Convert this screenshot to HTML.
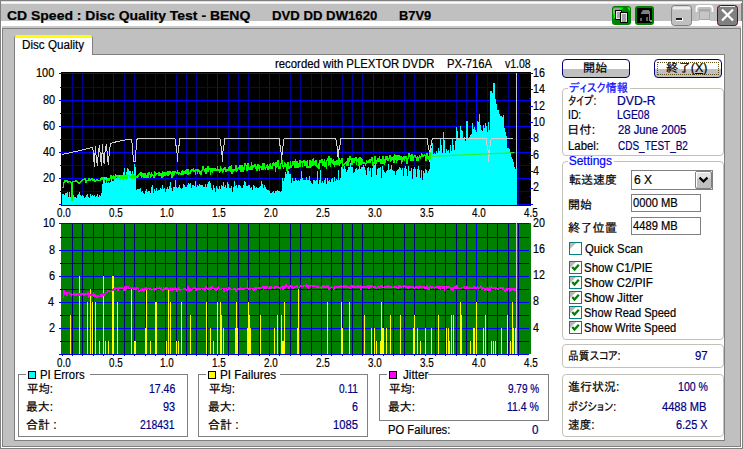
<!DOCTYPE html>
<html lang="ja"><head><meta charset="utf-8"><title>CD Speed : Disc Quality Test</title>
<style>
html,body{margin:0;padding:0}
body{width:743px;height:449px;overflow:hidden;background:#c0c0c0;position:relative;font-family:"Liberation Sans","IPAPGothic","IPAGothic","Noto Sans CJK JP",sans-serif;font-size:12px}
.t{position:absolute;height:14px;line-height:14px;white-space:nowrap;font-size:12px;-webkit-text-stroke:0.2px}

.a{position:absolute}
.gb{position:absolute;border:1px solid #808080;box-sizing:border-box}
.rg{position:absolute;border:1px solid #c2c2ba;border-radius:4px;box-sizing:border-box}
.cap{position:absolute;background:#fff;height:3px}
.btn{position:absolute;box-sizing:border-box;border:1px solid #000080;border-radius:4px;background:linear-gradient(#fff 0,#fff 52%,#c0c0c0 52%,#c0c0c0 100%)}
.ed{position:absolute;box-sizing:border-box;border:1px solid #808080;background:#fff}
.cb{position:absolute;box-sizing:border-box;width:13px;height:13px;border:1px solid #008080;background:#fff;overflow:hidden}
.cb:before{content:"";position:absolute;left:0;top:0;border-top:6px solid #b8b8b8;border-right:6px solid transparent}
.sq{position:absolute;box-sizing:border-box;width:8px;height:8px;border:1px solid #000}

</style></head><body>
<div class="a" style="left:0px;top:0px;width:743px;height:1px;background:#808080;"></div>
<div class="a" style="left:0px;top:1px;width:743px;height:1px;background:#dcdcdc;"></div>
<div class="a" style="left:0px;top:2px;width:743px;height:1px;background:#fff;"></div>
<div class="a" style="left:0px;top:3px;width:743px;height:1px;background:#ececec;"></div>
<div class="a" style="left:0px;top:0px;width:1px;height:449px;background:#808080;"></div>
<div class="a" style="left:1px;top:24px;width:1px;height:423px;background:#fff;"></div>
<div class="a" style="left:2px;top:28px;width:1px;height:418px;background:#808080;"></div>
<div class="a" style="left:742px;top:0px;width:1px;height:449px;background:#808080;"></div>
<div class="a" style="left:741px;top:3px;width:1px;height:21px;background:#808080;"></div>
<div class="a" style="left:741px;top:24px;width:1px;height:423px;background:#fff;"></div>
<div class="a" style="left:740px;top:28px;width:1px;height:418px;background:#808080;"></div>
<div class="a" style="left:0px;top:448px;width:743px;height:1px;background:#808080;"></div>
<div class="a" style="left:1px;top:447px;width:741px;height:1px;background:#fff;"></div>
<div class="a" style="left:2px;top:446px;width:739px;height:1px;background:#808080;"></div>
<div class="a" style="left:1px;top:21px;width:741px;height:5px;background:#fff;"></div>
<div class="a" style="left:2px;top:26px;width:739px;height:2px;background:#c8c8c8;"></div>
<div class="a" style="left:2px;top:28px;width:739px;height:1px;background:#808080;"></div>
<div class="a" style="left:14px;top:54px;width:711px;height:387px;background:#808080;"></div>
<div class="a" style="left:15px;top:55px;width:709px;height:385px;background:#fff;"></div>
<div class="a" style="left:14px;top:36px;width:79px;height:19px;background:#808080;border-radius:2px 2px 0 0"></div>
<div class="a" style="left:15px;top:35px;width:77px;height:3px;background:#ffff00;border-radius:2px 2px 0 0"></div>
<div class="a" style="left:15px;top:38px;width:77px;height:17px;background:#fff;"></div>
<svg class="a" style="left:610px;top:4px" width="46" height="23" viewBox="610 4 46 23">
<rect x="612" y="6" width="19" height="19" rx="3" fill="#008000"/>
<path d="M613.5,7.5h10l-10,12z" fill="#00ff00"/>
<path d="M627,7.5h3v4z" fill="#00ff00"/>
<path d="M613,9v6l7,-7h-5z" fill="#a0a0a0"/>
<rect x="615.5" y="10.5" width="6" height="9" fill="#e8e8e8" stroke="#000"/>
<rect x="620.500" y="12.5" width="7" height="10" fill="#e8e8e8" stroke="#000"/>
<path d="M617,13h3M617,15h3M617,17h3M622,15h4M622,17h4M622,19h4M622,21h4" stroke="#606060" stroke-width="1"/>
<rect x="635" y="6" width="19" height="19" rx="3" fill="#008000"/>
<rect x="637" y="8" width="15" height="15" fill="#000"/>
<path d="M641,13l2,-3h6v4h-8z" fill="#808080"/>
<rect x="649" y="11" width="1" height="10" fill="#808080"/>
<rect x="640" y="18" width="2" height="3" fill="#606060"/>
<rect x="646" y="17" width="2" height="4" fill="#606060"/>
<rect x="650" y="20" width="2" height="2" fill="#909090"/>
</svg>
<svg class="a" style="left:668px;top:3px" width="73" height="25" viewBox="668 3 73 25">
<rect x="671.5" y="5.500" width="20" height="20" rx="3" fill="#c0c0c0" stroke="#808080"/>
<rect x="672.5" y="6.5" width="18" height="3" rx="1.500" fill="#ececec"/>
<rect x="672" y="21" width="19" height="1" fill="#fff" opacity=".0"/>
<rect x="676" y="18" width="7" height="3" fill="#fff"/>
<rect x="676" y="18" width="6" height="2" fill="#202020"/>
<path d="M696.5,12v-3.500q0,-2.500 2.500,-2.500h11q2.500,0 2.500,2.500v3.500" fill="none" stroke="#fff" stroke-width="1.800"/>
<rect x="696" y="14" width="18" height="7" fill="#c4c4c4"/>
<rect x="699.5" y="10.5" width="10" height="10" fill="#c6c6c6" stroke="#fff"/>
<rect x="699.5" y="9.5" width="10" height="10" fill="none" stroke="#a8a8a8"/>
<rect x="699.5" y="9.500" width="10" height="2" fill="#a8a8a8"/>
<rect x="717.5" y="5.500" width="20" height="20" rx="3" fill="#808080" stroke="#800000"/>
<path d="M720,25.500h15" stroke="#800080" stroke-width="1"/>
<path d="M720,6.500h15" stroke="#e8e8e8" stroke-width="1"/>
<path d="M722,9.500l11,11M733,9.500l-11,11" stroke="#fff" stroke-width="2.200"/>
</svg>
<div class="btn" style="left:562px;top:59px;width:68px;height:19px"></div>
<div class="btn" style="left:654px;top:59px;width:68px;height:19px"><div class="a" style="left:2px;top:2px;right:2px;bottom:2px;border:1px dotted #605020"></div></div>
<div class="rg" style="left:562px;top:88px;width:162px;height:68px"></div>
<div class="cap" style="left:568px;top:87px;width:62px"></div>
<div class="rg" style="left:562px;top:161px;width:162px;height:179px"></div>
<div class="cap" style="left:568px;top:160px;width:46px"></div>
<div class="rg" style="left:562px;top:344px;width:162px;height:24px"></div>
<div class="rg" style="left:562px;top:374px;width:162px;height:63px"></div>
<div class="ed" style="left:631px;top:170px;width:82px;height:20px"></div>
<svg class="a" style="left:695px;top:171px" width="17" height="18" viewBox="0 0 17 18">
<rect x="0.5" y="0.5" width="16" height="17" rx="1.500" fill="#c0c0c0" stroke="#808080"/>
<rect x="1.500" y="1.500" width="14" height="6" fill="#e4e4e4"/>
<path d="M1.500,16V1.500H15" fill="none" stroke="#fff"/>
<path d="M4.500,6.500l4,4l4,-4" fill="none" stroke="#000" stroke-width="2.200"/>
</svg>
<div class="ed" style="left:631px;top:194px;width:70px;height:18px"></div>
<div class="ed" style="left:631px;top:217px;width:70px;height:18px"></div>
<div class="cb" style="left:569px;top:242px"></div>
<div class="cb" style="left:569px;top:261px"><svg class="a" style="left:0;top:0" width="11" height="11" viewBox="0 0 11 11"><path d="M2.200,5l2.300,2.600l4.300,-4.800" fill="none" stroke="#008000" stroke-width="2.200"/></svg></div>
<div class="cb" style="left:569px;top:276px"><svg class="a" style="left:0;top:0" width="11" height="11" viewBox="0 0 11 11"><path d="M2.200,5l2.300,2.600l4.300,-4.800" fill="none" stroke="#008000" stroke-width="2.200"/></svg></div>
<div class="cb" style="left:569px;top:291px"><svg class="a" style="left:0;top:0" width="11" height="11" viewBox="0 0 11 11"><path d="M2.200,5l2.300,2.600l4.300,-4.800" fill="none" stroke="#008000" stroke-width="2.200"/></svg></div>
<div class="cb" style="left:569px;top:306px"><svg class="a" style="left:0;top:0" width="11" height="11" viewBox="0 0 11 11"><path d="M2.200,5l2.300,2.600l4.300,-4.800" fill="none" stroke="#008000" stroke-width="2.200"/></svg></div>
<div class="cb" style="left:569px;top:321px"><svg class="a" style="left:0;top:0" width="11" height="11" viewBox="0 0 11 11"><path d="M2.200,5l2.300,2.600l4.300,-4.800" fill="none" stroke="#008000" stroke-width="2.200"/></svg></div>
<div class="gb" style="left:18px;top:374px;width:170px;height:63px"></div>
<div class="cap" style="left:26px;top:373px;width:64px"></div>
<div class="sq" style="left:28px;top:371px;background:#00ffff"></div>
<div class="gb" style="left:198px;top:374px;width:170px;height:63px"></div>
<div class="cap" style="left:206px;top:373px;width:74px"></div>
<div class="sq" style="left:208px;top:371px;background:#ffff00"></div>
<div class="gb" style="left:379px;top:374px;width:170px;height:47px"></div>
<div class="cap" style="left:387px;top:373px;width:41px"></div>
<div class="sq" style="left:389px;top:371px;background:#ff00ff"></div>
<svg width="743" height="449" viewBox="0 0 743 449" style="position:absolute;left:0;top:0" shape-rendering="crispEdges">
<rect x="61" y="72" width="470" height="134" fill="#000"/>
<rect x="72" y="73" width="1" height="132" fill="#000094"/>
<rect x="82" y="73" width="1" height="132" fill="#000094"/>
<rect x="93" y="73" width="1" height="132" fill="#000094"/>
<rect x="103" y="73" width="1" height="132" fill="#000094"/>
<rect x="113" y="73" width="1" height="132" fill="#0000ff"/>
<rect x="124" y="73" width="1" height="132" fill="#000094"/>
<rect x="134" y="73" width="1" height="132" fill="#000094"/>
<rect x="145" y="73" width="1" height="132" fill="#000094"/>
<rect x="155" y="73" width="1" height="132" fill="#000094"/>
<rect x="165" y="73" width="1" height="132" fill="#0000ff"/>
<rect x="176" y="73" width="1" height="132" fill="#000094"/>
<rect x="186" y="73" width="1" height="132" fill="#000094"/>
<rect x="196" y="73" width="1" height="132" fill="#000094"/>
<rect x="207" y="73" width="1" height="132" fill="#000094"/>
<rect x="217" y="73" width="1" height="132" fill="#0000ff"/>
<rect x="228" y="73" width="1" height="132" fill="#000094"/>
<rect x="238" y="73" width="1" height="132" fill="#000094"/>
<rect x="248" y="73" width="1" height="132" fill="#000094"/>
<rect x="259" y="73" width="1" height="132" fill="#000094"/>
<rect x="269" y="73" width="1" height="132" fill="#0000ff"/>
<rect x="279" y="73" width="1" height="132" fill="#000094"/>
<rect x="290" y="73" width="1" height="132" fill="#000094"/>
<rect x="300" y="73" width="1" height="132" fill="#000094"/>
<rect x="311" y="73" width="1" height="132" fill="#000094"/>
<rect x="321" y="73" width="1" height="132" fill="#0000ff"/>
<rect x="331" y="73" width="1" height="132" fill="#000094"/>
<rect x="342" y="73" width="1" height="132" fill="#000094"/>
<rect x="352" y="73" width="1" height="132" fill="#000094"/>
<rect x="362" y="73" width="1" height="132" fill="#000094"/>
<rect x="373" y="73" width="1" height="132" fill="#0000ff"/>
<rect x="383" y="73" width="1" height="132" fill="#000094"/>
<rect x="393" y="73" width="1" height="132" fill="#000094"/>
<rect x="404" y="73" width="1" height="132" fill="#000094"/>
<rect x="414" y="73" width="1" height="132" fill="#000094"/>
<rect x="425" y="73" width="1" height="132" fill="#0000ff"/>
<rect x="435" y="73" width="1" height="132" fill="#000094"/>
<rect x="445" y="73" width="1" height="132" fill="#000094"/>
<rect x="456" y="73" width="1" height="132" fill="#000094"/>
<rect x="466" y="73" width="1" height="132" fill="#000094"/>
<rect x="476" y="73" width="1" height="132" fill="#0000ff"/>
<rect x="487" y="73" width="1" height="132" fill="#000094"/>
<rect x="497" y="73" width="1" height="132" fill="#000094"/>
<rect x="508" y="73" width="1" height="132" fill="#000094"/>
<rect x="518" y="73" width="1" height="132" fill="#000094"/>
<rect x="62" y="73" width="469" height="1" fill="#0000ff"/>
<rect x="62" y="87" width="469" height="1" fill="#000094"/>
<rect x="62" y="100" width="469" height="1" fill="#0000ff"/>
<rect x="62" y="113" width="469" height="1" fill="#000094"/>
<rect x="62" y="126" width="469" height="1" fill="#0000ff"/>
<rect x="62" y="139" width="469" height="1" fill="#000094"/>
<rect x="62" y="152" width="469" height="1" fill="#0000ff"/>
<rect x="62" y="165" width="469" height="1" fill="#000094"/>
<rect x="62" y="178" width="469" height="1" fill="#0000ff"/>
<rect x="62" y="191" width="469" height="1" fill="#000094"/>
<rect x="62" y="204" width="469" height="1" fill="#0000ff"/>
<rect x="516" y="73" width="1" height="100" fill="#c8c8c8"/>
<path d="M62,205V194H63V194H64V195H65V193H66V193H67V192H68V197H69V192H70V197H71V195H72V194H73V195H74V197H75V197H76V198H77V195H78V194H79V192H80V195H81V196H82V195H83V196H84V198H85V197H86V195H87V194H88V197H89V198H90V194H91V196H92V195H93V196H94V195H95V197H96V196H97V194H98V197H99V195H100V196H101V193H102V184H103V180H104V177H105V183H106V177H107V183H108V182H109V183H110V182H111V178H112V181H113V181H114V178H115V174H116V178H117V178H118V178H119V175H120V178H121V177H122V175H123V172H124V168H125V176H126V172H127V168H128V169H129V171H130V171H131V174H132V171H133V174H134V164H135V167H136V190H137V189H138V189H139V189H140V188H141V192H142V191H143V193H144V194H145V191H146V189H147V192H148V191H149V191H150V193H151V187H152V185H153V193H154V189H155V191H156V188H157V191H158V190H159V190H160V188H161V189H162V185H163V189H164V188H165V192H166V189H167V187H168V189H169V186H170V182H171V188H172V191H173V187H174V187H175V180H176V187H177V188H178V187H179V185H180V188H181V189H182V188H183V184H184V185H185V187H186V187H187V185H188V183H189V184H190V183H191V188H192V185H193V185H194V186H195V181H196V187H197V185H198V186H199V184H200V185H201V185H202V185H203V187H204V187H205V184H206V187H207V184H208V182H209V181H210V183H211V188H212V190H213V185H214V188H215V192H216V186H217V188H218V189H219V186H220V189H221V185H222V186H223V182H224V187H225V185H226V188H227V182H228V184H229V188H230V188H231V186H232V192H233V187H234V181H235V186H236V185H237V188H238V185H239V185H240V186H241V188H242V188H243V185H244V181H245V182H246V186H247V186H248V185H249V185H250V188H251V187H252V190H253V185H254V186H255V188H256V187H257V188H258V188H259V187H260V186H261V181H262V184H263V188H264V185H265V187H266V189H267V190H268V190H269V191H270V193H271V193H272V192H273V191H274V193H275V191H276V191H277V190H278V191H279V191H280V192H281V191H282V178H283V181H284V178H285V172H286V174H287V171H288V171H289V174H290V174H291V183H292V178H293V181H294V181H295V178H296V180H297V181H298V180H299V181H300V179H301V171H302V178H303V180H304V180H305V180H306V177H307V180H308V180H309V176H310V181H311V183H312V184H313V180H314V180H315V181H316V180H317V171H318V184H319V180H320V170H321V183H322V181H323V183H324V180H325V178H326V184H327V178H328V181H329V180H330V182H331V179H332V178H333V182H334V177H335V181H336V179H337V180H338V170H339V180H340V178H341V167H342V165H343V169H344V166H345V169H346V172H347V170H348V167H349V167H350V163H351V167H352V167H353V173H354V172H355V169H356V168H357V170H358V169H359V166H360V169H361V167H362V167H363V165H364V167H365V170H366V175H367V168H368V167H369V171H370V168H371V177H372V168H373V164H374V165H375V164H376V175H377V169H378V168H379V168H380V167H381V178H382V166H383V170H384V172H385V173H386V171H387V170H388V164H389V170H390V169H391V165H392V170H393V171H394V171H395V175H396V171H397V170H398V169H399V167H400V168H401V170H402V168H403V176H404V168H405V166H406V169H407V176H408V166H409V171H410V171H411V168H412V179H413V169H414V167H415V169H416V177H417V169H418V166H419V170H420V178H421V170H422V180H423V171H424V173H425V169H426V170H427V173H428V171H429V169H430V145H431V148H432V143H433V154H434V153H435V154H436V151H437V153H438V148H439V151H440V139H441V145H442V153H443V132H444V140H445V153H446V149H447V151H448V150H449V153H450V145H451V151H452V139H453V145H454V150H455V141H456V127H457V131H458V138H459V139H460V126H461V130H462V131H463V139H464V137H465V141H466V121H467V121H468V138H469V137H470V135H471V134H472V123H473V129H474V127H475V130H476V132H477V121H478V122H479V114H480V125H481V130H482V131H483V125H484V128H485V123H486V126H487V132H488V122H489V130H490V91H491V91H492V93H493V83H494V83H495V99H496V104H497V110H498V110H499V114H500V116H501V116H502V117H503V115H504V128H505V132H506V136H507V148H508V148H509V149H510V153H511V157H512V159H513V162H514V167H515V169H516V168H517V205Z" fill="#00ffff"/>
<rect x="61" y="205" width="470" height="1" fill="#000"/>
<rect x="62" y="205" width="1" height="1" fill="#0000c0"/>
<rect x="72" y="205" width="1" height="1" fill="#0000c0"/>
<rect x="82" y="205" width="1" height="1" fill="#0000c0"/>
<rect x="93" y="205" width="1" height="1" fill="#0000c0"/>
<rect x="103" y="205" width="1" height="1" fill="#0000c0"/>
<rect x="113" y="205" width="1" height="1" fill="#0000c0"/>
<rect x="124" y="205" width="1" height="1" fill="#0000c0"/>
<rect x="134" y="205" width="1" height="1" fill="#0000c0"/>
<rect x="145" y="205" width="1" height="1" fill="#0000c0"/>
<rect x="155" y="205" width="1" height="1" fill="#0000c0"/>
<rect x="165" y="205" width="1" height="1" fill="#0000c0"/>
<rect x="176" y="205" width="1" height="1" fill="#0000c0"/>
<rect x="186" y="205" width="1" height="1" fill="#0000c0"/>
<rect x="196" y="205" width="1" height="1" fill="#0000c0"/>
<rect x="207" y="205" width="1" height="1" fill="#0000c0"/>
<rect x="217" y="205" width="1" height="1" fill="#0000c0"/>
<rect x="228" y="205" width="1" height="1" fill="#0000c0"/>
<rect x="238" y="205" width="1" height="1" fill="#0000c0"/>
<rect x="248" y="205" width="1" height="1" fill="#0000c0"/>
<rect x="259" y="205" width="1" height="1" fill="#0000c0"/>
<rect x="269" y="205" width="1" height="1" fill="#0000c0"/>
<rect x="279" y="205" width="1" height="1" fill="#0000c0"/>
<rect x="290" y="205" width="1" height="1" fill="#0000c0"/>
<rect x="300" y="205" width="1" height="1" fill="#0000c0"/>
<rect x="311" y="205" width="1" height="1" fill="#0000c0"/>
<rect x="321" y="205" width="1" height="1" fill="#0000c0"/>
<rect x="331" y="205" width="1" height="1" fill="#0000c0"/>
<rect x="342" y="205" width="1" height="1" fill="#0000c0"/>
<rect x="352" y="205" width="1" height="1" fill="#0000c0"/>
<rect x="362" y="205" width="1" height="1" fill="#0000c0"/>
<rect x="373" y="205" width="1" height="1" fill="#0000c0"/>
<rect x="383" y="205" width="1" height="1" fill="#0000c0"/>
<rect x="393" y="205" width="1" height="1" fill="#0000c0"/>
<rect x="404" y="205" width="1" height="1" fill="#0000c0"/>
<rect x="414" y="205" width="1" height="1" fill="#0000c0"/>
<rect x="425" y="205" width="1" height="1" fill="#0000c0"/>
<rect x="435" y="205" width="1" height="1" fill="#0000c0"/>
<rect x="445" y="205" width="1" height="1" fill="#0000c0"/>
<rect x="456" y="205" width="1" height="1" fill="#0000c0"/>
<rect x="466" y="205" width="1" height="1" fill="#0000c0"/>
<rect x="476" y="205" width="1" height="1" fill="#0000c0"/>
<rect x="487" y="205" width="1" height="1" fill="#0000c0"/>
<rect x="497" y="205" width="1" height="1" fill="#0000c0"/>
<rect x="508" y="205" width="1" height="1" fill="#0000c0"/>
<rect x="518" y="205" width="1" height="1" fill="#0000c0"/>
<rect x="528" y="205" width="1" height="1" fill="#0000c0"/>
<path d="M62.0,154.5 L85.0,149.4 L92.6,147.3 L93.4,152.0 L94.3,166.7 L95.4,146.2 L96.2,158.0 L97.5,165.8 L98.3,152.0 L99.5,145.4 L100.4,157.0 L101.5,165.8 L102.4,144.5 L103.2,155.0 L104.1,164.0 L105.2,150.0 L106.4,144.0 L107.4,156.0 L108.3,165.0 L109.5,149.5 L110.8,143.6 L113.3,142.5 L120.0,141.0 L127.0,139.6 L131.3,139.2 L132.5,146.0 L133.4,161.8 L135.6,161.8 L136.0,150.0 L137.1,138.5 L175.0,138.5 L175.9,145.5 L176.6,146.5 L177.5,161.5 L178.4,146.5 L179.1,145.5 L180.0,138.5 L219.9,138.5 L220.8,145.5 L221.5,146.5 L222.4,161.5 L223.3,146.5 L224.0,145.5 L224.9,138.5 L279.1,138.5 L280.0,145.5 L280.7,146.5 L281.6,161.5 L282.5,146.5 L283.2,145.5 L284.1,138.5 L335.8,138.5 L336.7,145.5 L337.4,146.5 L338.3,161.5 L339.2,146.5 L339.9,145.5 L340.8,138.5 L427.2,138.5 L428.1,145.5 L428.8,146.5 L429.7,161.5 L430.6,146.5 L431.3,145.5 L432.2,138.5 L486.2,138.5 L487.1,145.5 L487.8,146.5 L488.7,161.5 L489.6,146.5 L490.3,145.5 L491.2,138.5 L513.0,138.5" fill="none" stroke="#d0d0d0" stroke-width="1" stroke-linejoin="round"/>
<path d="M62,187h1v1h-1zM63,182h1v6h-1zM64,180h1v3h-1zM65,180h1v2h-1zM66,180h1v2h-1zM67,180h1v3h-1zM68,181h1v2h-1zM69,181h1v1h-1zM70,181h1v2h-1zM71,182h1v19h-1zM72,181h1v20h-1zM73,181h1v1h-1zM74,181h1v1h-1zM75,180h1v2h-1zM76,180h1v2h-1zM77,181h1v2h-1zM78,182h1v2h-1zM79,182h1v2h-1zM80,181h1v2h-1zM81,180h1v2h-1zM82,179h1v2h-1zM83,179h1v1h-1zM84,178h1v2h-1zM85,178h1v5h-1zM86,180h1v3h-1zM87,180h1v1h-1zM88,178h1v3h-1zM89,178h1v3h-1zM90,179h1v2h-1zM91,178h1v2h-1zM92,178h1v3h-1zM93,179h1v2h-1zM94,179h1v3h-1zM95,180h1v2h-1zM96,179h1v2h-1zM97,179h1v2h-1zM98,180h1v1h-1zM99,180h1v1h-1zM100,178h1v3h-1zM101,177h1v3h-1zM102,177h1v3h-1zM103,177h1v3h-1zM104,179h1v2h-1zM105,177h1v3h-1zM106,179h1v2h-1zM107,178h1v3h-1zM108,178h1v3h-1zM109,178h1v3h-1zM110,175h1v4h-1zM111,175h1v4h-1zM112,176h1v3h-1zM113,175h1v4h-1zM114,176h1v3h-1zM115,176h1v3h-1zM116,175h1v2h-1zM117,175h1v5h-1zM118,175h1v3h-1zM119,177h1v3h-1zM120,175h1v5h-1zM121,175h1v3h-1zM122,175h1v5h-1zM123,175h1v5h-1zM124,175h1v4h-1zM125,175h1v4h-1zM126,174h1v5h-1zM127,175h1v4h-1zM128,175h1v1h-1zM129,175h1v3h-1zM130,176h1v2h-1zM131,175h1v4h-1zM132,174h1v5h-1zM133,174h1v4h-1zM134,175h1v4h-1zM135,175h1v3h-1zM136,176h1v2h-1zM137,175h1v3h-1zM138,174h1v3h-1zM139,173h1v2h-1zM140,172h1v4h-1zM141,172h1v6h-1zM142,173h1v4h-1zM143,173h1v5h-1zM144,173h1v5h-1zM145,173h1v5h-1zM146,175h1v3h-1zM147,173h1v5h-1zM148,172h1v6h-1zM149,172h1v3h-1zM150,174h1v4h-1zM151,172h1v5h-1zM152,174h1v2h-1zM153,175h1v3h-1zM154,171h1v7h-1zM155,172h1v4h-1zM156,173h1v2h-1zM157,173h1v1h-1zM158,172h1v4h-1zM159,172h1v4h-1zM160,173h1v3h-1zM161,173h1v5h-1zM162,171h1v7h-1zM163,172h1v5h-1zM164,172h1v4h-1zM165,172h1v4h-1zM166,172h1v3h-1zM167,171h1v5h-1zM168,171h1v5h-1zM169,171h1v4h-1zM170,171h1v3h-1zM171,172h1v6h-1zM172,171h1v7h-1zM173,171h1v5h-1zM174,171h1v4h-1zM175,171h1v2h-1zM176,172h1v2h-1zM177,170h1v4h-1zM178,172h1v3h-1zM179,172h1v2h-1zM180,173h1v2h-1zM181,171h1v4h-1zM182,170h1v5h-1zM183,171h1v4h-1zM184,171h1v3h-1zM185,170h1v4h-1zM186,169h1v5h-1zM187,169h1v6h-1zM188,169h1v6h-1zM189,172h1v2h-1zM190,170h1v4h-1zM191,169h1v3h-1zM192,169h1v2h-1zM193,168h1v4h-1zM194,170h1v2h-1zM195,169h1v6h-1zM196,169h1v2h-1zM197,169h1v5h-1zM198,169h1v3h-1zM199,170h1v4h-1zM200,171h1v4h-1zM201,170h1v5h-1zM202,166h1v5h-1zM203,166h1v4h-1zM204,169h1v3h-1zM205,168h1v6h-1zM206,168h1v6h-1zM207,166h1v6h-1zM208,166h1v6h-1zM209,168h1v2h-1zM210,168h1v7h-1zM211,168h1v4h-1zM212,168h1v5h-1zM213,168h1v3h-1zM214,168h1v3h-1zM215,168h1v3h-1zM216,169h1v2h-1zM217,166h1v5h-1zM218,169h1v2h-1zM219,169h1v4h-1zM220,166h1v6h-1zM221,168h1v3h-1zM222,169h1v4h-1zM223,168h1v4h-1zM224,167h1v3h-1zM225,167h1v5h-1zM226,169h1v3h-1zM227,169h1v2h-1zM228,167h1v4h-1zM229,166h1v5h-1zM230,166h1v6h-1zM231,165h1v9h-1zM232,169h1v5h-1zM233,169h1v3h-1zM234,169h1v2h-1zM235,165h1v6h-1zM236,165h1v7h-1zM237,168h1v3h-1zM238,167h1v2h-1zM239,165h1v5h-1zM240,165h1v7h-1zM241,165h1v7h-1zM242,165h1v7h-1zM243,167h1v5h-1zM244,163h1v7h-1zM245,163h1v3h-1zM246,165h1v6h-1zM247,163h1v8h-1zM248,163h1v7h-1zM249,167h1v3h-1zM250,166h1v4h-1zM251,162h1v8h-1zM252,165h1v5h-1zM253,165h1v3h-1zM254,164h1v3h-1zM255,164h1v5h-1zM256,166h1v5h-1zM257,164h1v7h-1zM258,164h1v5h-1zM259,165h1v6h-1zM260,166h1v2h-1zM261,166h1v4h-1zM262,163h1v7h-1zM263,163h1v7h-1zM264,163h1v6h-1zM265,167h1v3h-1zM266,165h1v3h-1zM267,164h1v6h-1zM268,166h1v4h-1zM269,164h1v5h-1zM270,163h1v6h-1zM271,166h1v3h-1zM272,163h1v6h-1zM273,162h1v4h-1zM274,163h1v3h-1zM275,162h1v10h-1zM276,162h1v6h-1zM277,160h1v7h-1zM278,160h1v9h-1zM279,166h1v3h-1zM280,163h1v6h-1zM281,160h1v4h-1zM282,160h1v7h-1zM283,165h1v4h-1zM284,162h1v5h-1zM285,163h1v4h-1zM286,164h1v7h-1zM287,162h1v9h-1zM288,162h1v7h-1zM289,166h1v3h-1zM290,161h1v7h-1zM291,165h1v3h-1zM292,161h1v5h-1zM293,161h1v4h-1zM294,161h1v7h-1zM295,159h1v9h-1zM296,161h1v7h-1zM297,161h1v7h-1zM298,163h1v5h-1zM299,160h1v7h-1zM300,160h1v7h-1zM301,161h1v2h-1zM302,161h1v6h-1zM303,160h1v3h-1zM304,160h1v6h-1zM305,161h1v5h-1zM306,161h1v7h-1zM307,160h1v8h-1zM308,166h1v2h-1zM309,160h1v8h-1zM310,160h1v8h-1zM311,161h1v6h-1zM312,159h1v7h-1zM313,158h1v8h-1zM314,161h1v4h-1zM315,160h1v6h-1zM316,160h1v7h-1zM317,165h1v3h-1zM318,163h1v6h-1zM319,160h1v9h-1zM320,160h1v3h-1zM321,159h1v4h-1zM322,159h1v7h-1zM323,161h1v5h-1zM324,159h1v8h-1zM325,162h1v5h-1zM326,160h1v9h-1zM327,158h1v3h-1zM328,156h1v10h-1zM329,156h1v9h-1zM330,158h1v9h-1zM331,158h1v5h-1zM332,160h1v4h-1zM333,159h1v6h-1zM334,161h1v6h-1zM335,161h1v4h-1zM336,160h1v5h-1zM337,160h1v5h-1zM338,158h1v7h-1zM339,158h1v8h-1zM340,160h1v4h-1zM341,158h1v5h-1zM342,158h1v10h-1zM343,164h1v2h-1zM344,163h1v2h-1zM345,162h1v2h-1zM346,161h1v5h-1zM347,158h1v8h-1zM348,158h1v8h-1zM349,156h1v6h-1zM350,156h1v4h-1zM351,158h1v7h-1zM352,158h1v7h-1zM353,158h1v5h-1zM354,158h1v5h-1zM355,157h1v4h-1zM356,157h1v8h-1zM357,159h1v3h-1zM358,158h1v8h-1zM359,157h1v9h-1zM360,157h1v8h-1zM361,158h1v7h-1zM362,159h1v5h-1zM363,162h1v2h-1zM364,162h1v2h-1zM365,163h1v3h-1zM366,160h1v4h-1zM367,161h1v2h-1zM368,160h1v3h-1zM369,159h1v4h-1zM370,159h1v4h-1zM371,157h1v4h-1zM372,157h1v9h-1zM373,162h1v4h-1zM374,156h1v8h-1zM375,156h1v8h-1zM376,160h1v4h-1zM377,158h1v4h-1zM378,158h1v4h-1zM379,156h1v6h-1zM380,159h1v5h-1zM381,159h1v5h-1zM382,156h1v8h-1zM383,156h1v8h-1zM384,159h1v6h-1zM385,156h1v7h-1zM386,156h1v4h-1zM387,156h1v5h-1zM388,158h1v3h-1zM389,155h1v4h-1zM390,155h1v7h-1zM391,157h1v4h-1zM392,157h1v3h-1zM393,156h1v7h-1zM394,154h1v9h-1zM395,155h1v5h-1zM396,155h1v8h-1zM397,155h1v6h-1zM398,155h1v5h-1zM399,155h1v5h-1zM400,156h1v4h-1zM401,156h1v8h-1zM402,157h1v5h-1zM403,156h1v4h-1zM404,156h1v5h-1zM405,156h1v3h-1zM406,156h1v8h-1zM407,158h1v6h-1zM408,153h1v6h-1zM409,153h1v4h-1zM410,155h1v6h-1zM411,154h1v7h-1zM412,154h1v7h-1zM413,156h1v5h-1zM414,155h1v2h-1zM415,155h1v3h-1zM416,157h1v4h-1zM417,156h1v5h-1zM418,157h1v4h-1zM419,155h1v3h-1zM420,156h1v3h-1zM421,153h1v4h-1zM422,154h1v3h-1zM423,155h1v2h-1zM424,154h1v2h-1zM425,155h1v6h-1zM426,153h1v8h-1zM427,153h1v6h-1zM428,156h1v4h-1zM429,152h1v8h-1zM430,152h1v7h-1z" fill="#00ff00"/>
<path d="M430,156.4 L514.5,152.6" stroke="#28f428" stroke-width="1.3" shape-rendering="auto"/>
<rect x="59" y="73" width="3" height="1" fill="#00f"/>
<rect x="60" y="87" width="2" height="1" fill="#000094"/>
<rect x="59" y="100" width="3" height="1" fill="#00f"/>
<rect x="60" y="113" width="2" height="1" fill="#000094"/>
<rect x="59" y="126" width="3" height="1" fill="#00f"/>
<rect x="60" y="139" width="2" height="1" fill="#000094"/>
<rect x="59" y="152" width="3" height="1" fill="#00f"/>
<rect x="60" y="165" width="2" height="1" fill="#000094"/>
<rect x="59" y="178" width="3" height="1" fill="#00f"/>
<rect x="60" y="191" width="2" height="1" fill="#000094"/>
<rect x="59" y="204" width="3" height="1" fill="#00f"/>
<rect x="529" y="73" width="4" height="1" fill="#00f"/>
<rect x="529" y="81" width="2" height="1" fill="#00f"/>
<rect x="529" y="89" width="4" height="1" fill="#00f"/>
<rect x="529" y="98" width="2" height="1" fill="#00f"/>
<rect x="529" y="106" width="4" height="1" fill="#00f"/>
<rect x="529" y="114" width="2" height="1" fill="#00f"/>
<rect x="529" y="122" width="4" height="1" fill="#00f"/>
<rect x="529" y="130" width="2" height="1" fill="#00f"/>
<rect x="529" y="138" width="4" height="1" fill="#00f"/>
<rect x="529" y="147" width="2" height="1" fill="#00f"/>
<rect x="529" y="155" width="4" height="1" fill="#00f"/>
<rect x="529" y="163" width="2" height="1" fill="#00f"/>
<rect x="529" y="171" width="4" height="1" fill="#00f"/>
<rect x="529" y="179" width="2" height="1" fill="#00f"/>
<rect x="529" y="188" width="4" height="1" fill="#00f"/>
<rect x="529" y="196" width="2" height="1" fill="#00f"/>
<rect x="529" y="204" width="4" height="1" fill="#00f"/>
<rect x="61" y="223" width="470" height="131" fill="#008000"/>
<rect x="72" y="223" width="1" height="131" fill="#000080"/>
<rect x="82" y="223" width="1" height="131" fill="#000080"/>
<rect x="93" y="223" width="1" height="131" fill="#000080"/>
<rect x="103" y="223" width="1" height="131" fill="#000080"/>
<rect x="113" y="223" width="1" height="131" fill="#0000ff"/>
<rect x="124" y="223" width="1" height="131" fill="#000080"/>
<rect x="134" y="223" width="1" height="131" fill="#000080"/>
<rect x="145" y="223" width="1" height="131" fill="#000080"/>
<rect x="155" y="223" width="1" height="131" fill="#000080"/>
<rect x="165" y="223" width="1" height="131" fill="#0000ff"/>
<rect x="176" y="223" width="1" height="131" fill="#000080"/>
<rect x="186" y="223" width="1" height="131" fill="#000080"/>
<rect x="196" y="223" width="1" height="131" fill="#000080"/>
<rect x="207" y="223" width="1" height="131" fill="#000080"/>
<rect x="217" y="223" width="1" height="131" fill="#0000ff"/>
<rect x="228" y="223" width="1" height="131" fill="#000080"/>
<rect x="238" y="223" width="1" height="131" fill="#000080"/>
<rect x="248" y="223" width="1" height="131" fill="#000080"/>
<rect x="259" y="223" width="1" height="131" fill="#000080"/>
<rect x="269" y="223" width="1" height="131" fill="#0000ff"/>
<rect x="279" y="223" width="1" height="131" fill="#000080"/>
<rect x="290" y="223" width="1" height="131" fill="#000080"/>
<rect x="300" y="223" width="1" height="131" fill="#000080"/>
<rect x="311" y="223" width="1" height="131" fill="#000080"/>
<rect x="321" y="223" width="1" height="131" fill="#0000ff"/>
<rect x="331" y="223" width="1" height="131" fill="#000080"/>
<rect x="342" y="223" width="1" height="131" fill="#000080"/>
<rect x="352" y="223" width="1" height="131" fill="#000080"/>
<rect x="362" y="223" width="1" height="131" fill="#000080"/>
<rect x="373" y="223" width="1" height="131" fill="#0000ff"/>
<rect x="383" y="223" width="1" height="131" fill="#000080"/>
<rect x="393" y="223" width="1" height="131" fill="#000080"/>
<rect x="404" y="223" width="1" height="131" fill="#000080"/>
<rect x="414" y="223" width="1" height="131" fill="#000080"/>
<rect x="425" y="223" width="1" height="131" fill="#0000ff"/>
<rect x="435" y="223" width="1" height="131" fill="#000080"/>
<rect x="445" y="223" width="1" height="131" fill="#000080"/>
<rect x="456" y="223" width="1" height="131" fill="#000080"/>
<rect x="466" y="223" width="1" height="131" fill="#000080"/>
<rect x="476" y="223" width="1" height="131" fill="#0000ff"/>
<rect x="487" y="223" width="1" height="131" fill="#000080"/>
<rect x="497" y="223" width="1" height="131" fill="#000080"/>
<rect x="508" y="223" width="1" height="131" fill="#000080"/>
<rect x="518" y="223" width="1" height="131" fill="#000080"/>
<rect x="62" y="223" width="467" height="1" fill="#0000ff"/>
<rect x="62" y="237" width="467" height="1" fill="#000080"/>
<rect x="62" y="250" width="467" height="1" fill="#0000ff"/>
<rect x="62" y="263" width="467" height="1" fill="#000080"/>
<rect x="62" y="276" width="467" height="1" fill="#0000ff"/>
<rect x="62" y="289" width="467" height="1" fill="#000080"/>
<rect x="62" y="302" width="467" height="1" fill="#0000ff"/>
<rect x="62" y="315" width="467" height="1" fill="#000080"/>
<rect x="62" y="328" width="467" height="1" fill="#0000ff"/>
<rect x="62" y="341" width="467" height="1" fill="#000080"/>
<rect x="62" y="223" width="467" height="1" fill="#00f"/>
<g fill="#ffff00"><rect x="70" y="315" width="1" height="39"/>
<rect x="79" y="276" width="1" height="78"/>
<rect x="87" y="302" width="1" height="52"/>
<rect x="90" y="289" width="1" height="65"/>
<rect x="92" y="302" width="1" height="52"/>
<rect x="95" y="302" width="1" height="52"/>
<rect x="99" y="341" width="1" height="13"/>
<rect x="103" y="276" width="1" height="78"/>
<rect x="105" y="341" width="1" height="13"/>
<rect x="108" y="341" width="1" height="13"/>
<rect x="112" y="276" width="2" height="78"/>
<rect x="117" y="302" width="1" height="52"/>
<rect x="131" y="289" width="1" height="65"/>
<rect x="134" y="341" width="2" height="13"/>
<rect x="145" y="328" width="1" height="26"/>
<rect x="146" y="289" width="1" height="65"/>
<rect x="150" y="341" width="1" height="13"/>
<rect x="155" y="302" width="2" height="52"/>
<rect x="166" y="341" width="1" height="13"/>
<rect x="168" y="289" width="1" height="65"/>
<rect x="170" y="302" width="1" height="52"/>
<rect x="176" y="341" width="1" height="13"/>
<rect x="178" y="341" width="1" height="13"/>
<rect x="170" y="302" width="1" height="52"/>
<rect x="181" y="302" width="1" height="52"/>
<rect x="190" y="315" width="1" height="39"/>
<rect x="206" y="302" width="1" height="52"/>
<rect x="210" y="328" width="1" height="26"/>
<rect x="213" y="341" width="1" height="13"/>
<rect x="217" y="302" width="1" height="52"/>
<rect x="220" y="302" width="1" height="52"/>
<rect x="221" y="315" width="1" height="39"/>
<rect x="223" y="328" width="1" height="26"/>
<rect x="235" y="328" width="3" height="26"/>
<rect x="236" y="302" width="1" height="52"/>
<rect x="247" y="328" width="4" height="26"/>
<rect x="248" y="302" width="1" height="52"/>
<rect x="249" y="315" width="1" height="39"/>
<rect x="260" y="315" width="1" height="39"/>
<rect x="274" y="328" width="1" height="26"/>
<rect x="277" y="315" width="1" height="39"/>
<rect x="281" y="315" width="1" height="39"/>
<rect x="281" y="341" width="4" height="13"/>
<rect x="284" y="302" width="1" height="52"/>
<rect x="297" y="328" width="2" height="26"/>
<rect x="298" y="289" width="1" height="65"/>
<rect x="327" y="302" width="1" height="52"/>
<rect x="341" y="302" width="1" height="52"/>
<rect x="341" y="328" width="2" height="26"/>
<rect x="349" y="302" width="1" height="52"/>
<rect x="364" y="315" width="1" height="39"/>
<rect x="371" y="328" width="1" height="26"/>
<rect x="374" y="328" width="1" height="26"/>
<rect x="376" y="341" width="1" height="13"/>
<rect x="380" y="341" width="4" height="13"/>
<rect x="381" y="302" width="1" height="52"/>
<rect x="381" y="328" width="3" height="26"/>
<rect x="386" y="328" width="1" height="26"/>
<rect x="390" y="315" width="1" height="39"/>
<rect x="400" y="315" width="1" height="39"/>
<rect x="413" y="328" width="2" height="26"/>
<rect x="414" y="315" width="1" height="39"/>
<rect x="417" y="328" width="1" height="26"/>
<rect x="420" y="341" width="1" height="13"/>
<rect x="425" y="328" width="1" height="26"/>
<rect x="431" y="328" width="1" height="26"/>
<rect x="438" y="315" width="1" height="39"/>
<rect x="446" y="328" width="1" height="26"/>
<rect x="448" y="328" width="1" height="26"/>
<rect x="448" y="341" width="2" height="13"/>
<rect x="451" y="315" width="1" height="39"/>
<rect x="453" y="315" width="1" height="39"/>
<rect x="460" y="315" width="2" height="39"/>
<rect x="460" y="302" width="1" height="52"/>
<rect x="470" y="341" width="1" height="13"/>
<rect x="473" y="328" width="2" height="26"/>
<rect x="476" y="302" width="1" height="52"/>
<rect x="483" y="328" width="1" height="26"/>
<rect x="485" y="315" width="1" height="39"/>
<rect x="491" y="341" width="1" height="13"/>
<rect x="493" y="341" width="1" height="13"/>
<rect x="495" y="341" width="1" height="13"/>
<rect x="501" y="328" width="1" height="26"/>
<rect x="507" y="315" width="1" height="39"/>
<rect x="510" y="341" width="1" height="13"/>
<rect x="512" y="302" width="1" height="52"/>
<rect x="513" y="328" width="1" height="26"/>
<rect x="515" y="328" width="1" height="26"/></g>
<rect x="516" y="223" width="1" height="132" fill="#c8c8c8"/>
<path d="M62,297h1v1h-1zM63,290h1v8h-1zM64,290h1v5h-1zM65,292h1v2h-1zM66,292h1v4h-1zM67,292h1v4h-1zM68,292h1v1h-1zM69,292h1v3h-1zM70,293h1v2h-1zM71,293h1v4h-1zM72,294h1v1h-1zM73,292h1v3h-1zM74,293h1v3h-1zM75,293h1v3h-1zM76,293h1v3h-1zM77,293h1v2h-1zM78,293h1v3h-1zM79,293h1v3h-1zM80,293h1v3h-1zM81,293h1v2h-1zM82,293h1v2h-1zM83,293h1v3h-1zM84,293h1v3h-1zM85,293h1v2h-1zM86,293h1v2h-1zM87,292h1v3h-1zM88,292h1v6h-1zM89,293h1v4h-1zM90,294h1v2h-1zM91,295h1v3h-1zM92,294h1v2h-1zM93,292h1v5h-1zM94,294h1v3h-1zM95,294h1v3h-1zM96,295h1v3h-1zM97,295h1v3h-1zM98,295h1v2h-1zM99,296h1v1h-1zM100,294h1v3h-1zM101,294h1v3h-1zM102,293h1v4h-1zM103,293h1v3h-1zM104,294h1v2h-1zM105,292h1v3h-1zM106,292h1v1h-1zM107,290h1v3h-1zM108,290h1v2h-1zM109,290h1v2h-1zM110,291h1v1h-1zM111,290h1v2h-1zM112,289h1v2h-1zM113,288h1v3h-1zM114,287h1v3h-1zM115,287h1v3h-1zM116,288h1v1h-1zM117,287h1v4h-1zM118,287h1v4h-1zM119,287h1v2h-1zM120,287h1v2h-1zM121,287h1v2h-1zM122,287h1v2h-1zM123,288h1v3h-1zM124,286h1v5h-1zM125,287h1v4h-1zM126,286h1v4h-1zM127,286h1v1h-1zM128,286h1v3h-1zM129,288h1v1h-1zM130,287h1v2h-1zM131,287h1v2h-1zM132,287h1v2h-1zM133,288h1v2h-1zM134,287h1v3h-1zM135,288h1v2h-1zM136,287h1v3h-1zM137,287h1v2h-1zM138,288h1v4h-1zM139,290h1v2h-1zM140,289h1v2h-1zM141,288h1v3h-1zM142,288h1v3h-1zM143,289h1v3h-1zM144,288h1v3h-1zM145,287h1v3h-1zM146,287h1v3h-1zM147,288h1v2h-1zM148,288h1v1h-1zM149,288h1v2h-1zM150,288h1v2h-1zM151,289h1v2h-1zM152,289h1v1h-1zM153,288h1v2h-1zM154,288h1v3h-1zM155,288h1v2h-1zM156,287h1v3h-1zM157,287h1v2h-1zM158,288h1v1h-1zM159,286h1v3h-1zM160,288h1v2h-1zM161,287h1v3h-1zM162,289h1v2h-1zM163,287h1v4h-1zM164,288h1v2h-1zM165,287h1v3h-1zM166,287h1v3h-1zM167,287h1v3h-1zM168,288h1v2h-1zM169,289h1v2h-1zM170,288h1v3h-1zM171,287h1v3h-1zM172,288h1v3h-1zM173,288h1v2h-1zM174,287h1v3h-1zM175,287h1v3h-1zM176,288h1v4h-1zM177,289h1v3h-1zM178,287h1v3h-1zM179,287h1v4h-1zM180,289h1v2h-1zM181,289h1v1h-1zM182,289h1v1h-1zM183,288h1v2h-1zM184,288h1v2h-1zM185,288h1v2h-1zM186,289h1v2h-1zM187,286h1v4h-1zM188,286h1v6h-1zM189,288h1v4h-1zM190,288h1v3h-1zM191,289h1v2h-1zM192,288h1v2h-1zM193,287h1v2h-1zM194,287h1v2h-1zM195,287h1v4h-1zM196,288h1v3h-1zM197,288h1v2h-1zM198,288h1v2h-1zM199,288h1v2h-1zM200,288h1v2h-1zM201,288h1v1h-1zM202,288h1v2h-1zM203,288h1v2h-1zM204,288h1v3h-1zM205,286h1v5h-1zM206,286h1v3h-1zM207,288h1v2h-1zM208,288h1v2h-1zM209,287h1v4h-1zM210,287h1v3h-1zM211,286h1v4h-1zM212,286h1v3h-1zM213,288h1v1h-1zM214,288h1v2h-1zM215,288h1v3h-1zM216,288h1v3h-1zM217,287h1v3h-1zM218,286h1v3h-1zM219,288h1v2h-1zM220,289h1v1h-1zM221,288h1v2h-1zM222,288h1v1h-1zM223,288h1v4h-1zM224,288h1v4h-1zM225,288h1v1h-1zM226,288h1v3h-1zM227,289h1v2h-1zM228,287h1v3h-1zM229,287h1v3h-1zM230,288h1v2h-1zM231,289h1v1h-1zM232,289h1v1h-1zM233,288h1v2h-1zM234,288h1v2h-1zM235,288h1v4h-1zM236,289h1v3h-1zM237,288h1v2h-1zM238,288h1v2h-1zM239,288h1v2h-1zM240,287h1v3h-1zM241,288h1v2h-1zM242,288h1v2h-1zM243,288h1v2h-1zM244,288h1v2h-1zM245,288h1v1h-1zM246,287h1v2h-1zM247,280h1v9h-1zM248,288h1v2h-1zM249,287h1v3h-1zM250,288h1v2h-1zM251,288h1v1h-1zM252,288h1v2h-1zM253,288h1v3h-1zM254,287h1v4h-1zM255,287h1v3h-1zM256,287h1v3h-1zM257,287h1v2h-1zM258,287h1v2h-1zM259,287h1v2h-1zM260,287h1v2h-1zM261,287h1v2h-1zM262,286h1v2h-1zM263,286h1v4h-1zM264,286h1v3h-1zM265,286h1v3h-1zM266,286h1v3h-1zM267,286h1v2h-1zM268,287h1v2h-1zM269,286h1v3h-1zM270,286h1v3h-1zM271,286h1v3h-1zM272,287h1v1h-1zM273,287h1v2h-1zM274,286h1v3h-1zM275,286h1v2h-1zM276,286h1v2h-1zM277,286h1v2h-1zM278,286h1v2h-1zM279,287h1v2h-1zM280,287h1v3h-1zM281,286h1v2h-1zM282,286h1v4h-1zM283,285h1v5h-1zM284,286h1v3h-1zM285,284h1v4h-1zM286,284h1v3h-1zM287,286h1v1h-1zM288,286h1v3h-1zM289,286h1v3h-1zM290,285h1v2h-1zM291,285h1v3h-1zM292,286h1v3h-1zM293,287h1v2h-1zM294,286h1v2h-1zM295,286h1v2h-1zM296,285h1v2h-1zM297,285h1v3h-1zM298,287h1v1h-1zM299,286h1v2h-1zM300,285h1v2h-1zM301,285h1v2h-1zM302,286h1v1h-1zM303,285h1v2h-1zM304,285h1v1h-1zM305,285h1v2h-1zM306,284h1v3h-1zM307,285h1v3h-1zM308,285h1v4h-1zM309,285h1v2h-1zM310,285h1v2h-1zM311,285h1v1h-1zM312,285h1v2h-1zM313,285h1v2h-1zM314,285h1v2h-1zM315,285h1v2h-1zM316,286h1v2h-1zM317,286h1v2h-1zM318,285h1v3h-1zM319,287h1v1h-1zM320,287h1v1h-1zM321,286h1v3h-1zM322,285h1v3h-1zM323,285h1v3h-1zM324,285h1v3h-1zM325,286h1v2h-1zM326,285h1v3h-1zM327,285h1v3h-1zM328,285h1v5h-1zM329,287h1v3h-1zM330,287h1v2h-1zM331,286h1v2h-1zM332,287h1v1h-1zM333,287h1v3h-1zM334,286h1v4h-1zM335,286h1v1h-1zM336,286h1v2h-1zM337,286h1v2h-1zM338,286h1v2h-1zM339,286h1v2h-1zM340,285h1v3h-1zM341,285h1v4h-1zM342,286h1v1h-1zM343,285h1v3h-1zM344,285h1v3h-1zM345,285h1v3h-1zM346,285h1v3h-1zM347,286h1v2h-1zM348,286h1v2h-1zM349,287h1v2h-1zM350,285h1v4h-1zM351,285h1v2h-1zM352,285h1v3h-1zM353,286h1v2h-1zM354,285h1v3h-1zM355,286h1v2h-1zM356,286h1v2h-1zM357,285h1v3h-1zM358,285h1v3h-1zM359,286h1v2h-1zM360,285h1v5h-1zM361,285h1v5h-1zM362,286h1v2h-1zM363,286h1v2h-1zM364,286h1v2h-1zM365,286h1v2h-1zM366,286h1v2h-1zM367,285h1v3h-1zM368,285h1v4h-1zM369,285h1v4h-1zM370,285h1v3h-1zM371,285h1v3h-1zM372,285h1v2h-1zM373,286h1v2h-1zM374,286h1v2h-1zM375,286h1v3h-1zM376,287h1v2h-1zM377,286h1v2h-1zM378,286h1v2h-1zM379,286h1v3h-1zM380,285h1v2h-1zM381,285h1v3h-1zM382,285h1v3h-1zM383,287h1v1h-1zM384,286h1v2h-1zM385,286h1v2h-1zM386,286h1v2h-1zM387,285h1v3h-1zM388,285h1v3h-1zM389,286h1v2h-1zM390,286h1v2h-1zM391,286h1v2h-1zM392,287h1v1h-1zM393,286h1v2h-1zM394,286h1v2h-1zM395,286h1v2h-1zM396,286h1v2h-1zM397,287h1v2h-1zM398,285h1v4h-1zM399,285h1v3h-1zM400,285h1v3h-1zM401,286h1v2h-1zM402,286h1v1h-1zM403,285h1v3h-1zM404,285h1v2h-1zM405,286h1v2h-1zM406,286h1v2h-1zM407,286h1v3h-1zM408,286h1v3h-1zM409,286h1v2h-1zM410,286h1v2h-1zM411,286h1v2h-1zM412,286h1v2h-1zM413,286h1v3h-1zM414,287h1v2h-1zM415,286h1v2h-1zM416,286h1v2h-1zM417,286h1v3h-1zM418,286h1v3h-1zM419,286h1v2h-1zM420,285h1v3h-1zM421,287h1v2h-1zM422,286h1v2h-1zM423,286h1v2h-1zM424,286h1v3h-1zM425,287h1v2h-1zM426,285h1v4h-1zM427,285h1v5h-1zM428,287h1v3h-1zM429,286h1v4h-1zM430,286h1v2h-1zM431,286h1v3h-1zM432,286h1v2h-1zM433,287h1v1h-1zM434,287h1v2h-1zM435,286h1v2h-1zM436,286h1v2h-1zM437,286h1v2h-1zM438,286h1v3h-1zM439,286h1v3h-1zM440,286h1v4h-1zM441,286h1v1h-1zM442,286h1v3h-1zM443,286h1v3h-1zM444,286h1v5h-1zM445,286h1v1h-1zM446,286h1v3h-1zM447,286h1v2h-1zM448,286h1v2h-1zM449,286h1v2h-1zM450,287h1v3h-1zM451,287h1v3h-1zM452,287h1v4h-1zM453,287h1v4h-1zM454,286h1v3h-1zM455,286h1v3h-1zM456,285h1v4h-1zM457,285h1v4h-1zM458,287h1v2h-1zM459,288h1v1h-1zM460,288h1v1h-1zM461,287h1v2h-1zM462,287h1v1h-1zM463,286h1v2h-1zM464,286h1v3h-1zM465,288h1v1h-1zM466,286h1v3h-1zM467,286h1v3h-1zM468,287h1v2h-1zM469,286h1v3h-1zM470,287h1v2h-1zM471,287h1v2h-1zM472,287h1v2h-1zM473,286h1v3h-1zM474,286h1v3h-1zM475,287h1v2h-1zM476,287h1v2h-1zM477,286h1v2h-1zM478,287h1v3h-1zM479,287h1v2h-1zM480,285h1v3h-1zM481,286h1v4h-1zM482,287h1v3h-1zM483,287h1v2h-1zM484,288h1v3h-1zM485,288h1v3h-1zM486,288h1v2h-1zM487,287h1v4h-1zM488,288h1v3h-1zM489,286h1v5h-1zM490,287h1v4h-1zM491,285h1v3h-1zM492,287h1v2h-1zM493,287h1v2h-1zM494,287h1v2h-1zM495,287h1v3h-1zM496,287h1v2h-1zM497,288h1v2h-1zM498,288h1v2h-1zM499,287h1v2h-1zM500,287h1v2h-1zM501,287h1v2h-1zM502,287h1v3h-1zM503,287h1v3h-1zM504,289h1v3h-1zM505,288h1v4h-1zM506,288h1v3h-1zM507,288h1v3h-1zM508,288h1v1h-1zM509,288h1v4h-1zM510,288h1v3h-1zM511,288h1v3h-1zM512,288h1v2h-1zM513,288h1v3h-1zM514,288h1v3h-1zM515,288h1v3h-1z" fill="#ff00ff"/>
<rect x="59" y="354" width="470" height="1" fill="#00f"/>
<rect x="62" y="355" width="1" height="1" fill="#000080"/>
<rect x="72" y="355" width="1" height="1" fill="#000080"/>
<rect x="82" y="355" width="1" height="1" fill="#000080"/>
<rect x="93" y="355" width="1" height="1" fill="#000080"/>
<rect x="103" y="355" width="1" height="1" fill="#000080"/>
<rect x="113" y="355" width="1" height="1" fill="#000080"/>
<rect x="124" y="355" width="1" height="1" fill="#000080"/>
<rect x="134" y="355" width="1" height="1" fill="#000080"/>
<rect x="145" y="355" width="1" height="1" fill="#000080"/>
<rect x="155" y="355" width="1" height="1" fill="#000080"/>
<rect x="165" y="355" width="1" height="1" fill="#000080"/>
<rect x="176" y="355" width="1" height="1" fill="#000080"/>
<rect x="186" y="355" width="1" height="1" fill="#000080"/>
<rect x="196" y="355" width="1" height="1" fill="#000080"/>
<rect x="207" y="355" width="1" height="1" fill="#000080"/>
<rect x="217" y="355" width="1" height="1" fill="#000080"/>
<rect x="228" y="355" width="1" height="1" fill="#000080"/>
<rect x="238" y="355" width="1" height="1" fill="#000080"/>
<rect x="248" y="355" width="1" height="1" fill="#000080"/>
<rect x="259" y="355" width="1" height="1" fill="#000080"/>
<rect x="269" y="355" width="1" height="1" fill="#000080"/>
<rect x="279" y="355" width="1" height="1" fill="#000080"/>
<rect x="290" y="355" width="1" height="1" fill="#000080"/>
<rect x="300" y="355" width="1" height="1" fill="#000080"/>
<rect x="311" y="355" width="1" height="1" fill="#000080"/>
<rect x="321" y="355" width="1" height="1" fill="#000080"/>
<rect x="331" y="355" width="1" height="1" fill="#000080"/>
<rect x="342" y="355" width="1" height="1" fill="#000080"/>
<rect x="352" y="355" width="1" height="1" fill="#000080"/>
<rect x="362" y="355" width="1" height="1" fill="#000080"/>
<rect x="373" y="355" width="1" height="1" fill="#000080"/>
<rect x="383" y="355" width="1" height="1" fill="#000080"/>
<rect x="393" y="355" width="1" height="1" fill="#000080"/>
<rect x="404" y="355" width="1" height="1" fill="#000080"/>
<rect x="414" y="355" width="1" height="1" fill="#000080"/>
<rect x="425" y="355" width="1" height="1" fill="#000080"/>
<rect x="435" y="355" width="1" height="1" fill="#000080"/>
<rect x="445" y="355" width="1" height="1" fill="#000080"/>
<rect x="456" y="355" width="1" height="1" fill="#000080"/>
<rect x="466" y="355" width="1" height="1" fill="#000080"/>
<rect x="476" y="355" width="1" height="1" fill="#000080"/>
<rect x="487" y="355" width="1" height="1" fill="#000080"/>
<rect x="497" y="355" width="1" height="1" fill="#000080"/>
<rect x="508" y="355" width="1" height="1" fill="#000080"/>
<rect x="518" y="355" width="1" height="1" fill="#000080"/>
<rect x="59" y="223" width="3" height="1" fill="#00f"/>
<rect x="60" y="237" width="2" height="1" fill="#000080"/>
<rect x="59" y="250" width="3" height="1" fill="#00f"/>
<rect x="60" y="263" width="2" height="1" fill="#000080"/>
<rect x="59" y="276" width="3" height="1" fill="#00f"/>
<rect x="60" y="289" width="2" height="1" fill="#000080"/>
<rect x="59" y="302" width="3" height="1" fill="#00f"/>
<rect x="60" y="315" width="2" height="1" fill="#000080"/>
<rect x="59" y="328" width="3" height="1" fill="#00f"/>
<rect x="60" y="341" width="2" height="1" fill="#000080"/>
<rect x="59" y="354" width="3" height="1" fill="#00f"/>
</svg>
<div class="t" style="left:7.0px;top:8.5px;color:#000;transform-origin:0 50%;transform:scaleX(1.163);font-weight:bold;">CD Speed : Disc Quality Test - BENQ</div>
<div class="t" style="left:271.9px;top:8.5px;color:#000;transform-origin:0 50%;transform:scaleX(1.097);font-weight:bold;">DVD DD DW1620</div>
<div class="t" style="left:399.1px;top:8.5px;color:#000;transform-origin:0 50%;transform:scaleX(1.069);font-weight:bold;">B7V9</div>
<div class="t" style="left:21.9px;top:37.5px;color:#000;transform-origin:0 50%;transform:scaleX(0.971);">Disc Quality</div>
<div class="t" style="left:275.0px;top:56.5px;color:#000;transform-origin:0 50%;transform:scaleX(0.947);">recorded with PLEXTOR DVDR</div>
<div class="t" style="left:446.7px;top:56.5px;color:#000;transform-origin:0 50%;transform:scaleX(0.938);">PX-716A</div>
<div class="t" style="left:505.4px;top:56.5px;color:#000;transform-origin:0 50%;transform:scaleX(0.872);">v1.08</div>
<div class="t" style="left:36.4px;top:65.7px;color:#000;transform-origin:0 50%;transform:scaleX(0.910);">100</div>
<div class="t" style="left:42.8px;top:92.7px;color:#000;transform-origin:0 50%;transform:scaleX(0.910);">80</div>
<div class="t" style="left:42.8px;top:118.7px;color:#000;transform-origin:0 50%;transform:scaleX(0.910);">60</div>
<div class="t" style="left:42.8px;top:144.7px;color:#000;transform-origin:0 50%;transform:scaleX(0.910);">40</div>
<div class="t" style="left:42.8px;top:170.7px;color:#000;transform-origin:0 50%;transform:scaleX(0.910);">20</div>
<div class="t" style="left:42.8px;top:215.7px;color:#000;transform-origin:0 50%;transform:scaleX(0.910);">10</div>
<div class="t" style="left:49.1px;top:242.7px;color:#000;transform-origin:0 50%;transform:scaleX(0.910);">8</div>
<div class="t" style="left:49.1px;top:268.7px;color:#000;transform-origin:0 50%;transform:scaleX(0.910);">6</div>
<div class="t" style="left:48.2px;top:294.7px;color:#000;transform-origin:0 50%;transform:scaleX(0.910);">4</div>
<div class="t" style="left:49.1px;top:320.7px;color:#000;transform-origin:0 50%;transform:scaleX(0.910);">2</div>
<div class="t" style="left:532.5px;top:65.7px;color:#000;transform-origin:0 50%;transform:scaleX(0.890);">16</div>
<div class="t" style="left:532.5px;top:82.1px;color:#000;transform-origin:0 50%;transform:scaleX(0.890);">14</div>
<div class="t" style="left:532.5px;top:98.5px;color:#000;transform-origin:0 50%;transform:scaleX(0.890);">12</div>
<div class="t" style="left:532.5px;top:114.8px;color:#000;transform-origin:0 50%;transform:scaleX(0.890);">10</div>
<div class="t" style="left:533.4px;top:131.2px;color:#000;transform-origin:0 50%;transform:scaleX(0.890);">8</div>
<div class="t" style="left:533.4px;top:147.6px;color:#000;transform-origin:0 50%;transform:scaleX(0.890);">6</div>
<div class="t" style="left:533.4px;top:163.9px;color:#000;transform-origin:0 50%;transform:scaleX(0.890);">4</div>
<div class="t" style="left:533.4px;top:180.3px;color:#000;transform-origin:0 50%;transform:scaleX(0.890);">2</div>
<div class="t" style="left:533.4px;top:215.7px;color:#000;transform-origin:0 50%;transform:scaleX(0.890);">20</div>
<div class="t" style="left:532.5px;top:241.9px;color:#000;transform-origin:0 50%;transform:scaleX(0.890);">16</div>
<div class="t" style="left:532.5px;top:268.1px;color:#000;transform-origin:0 50%;transform:scaleX(0.890);">12</div>
<div class="t" style="left:533.4px;top:294.3px;color:#000;transform-origin:0 50%;transform:scaleX(0.890);">8</div>
<div class="t" style="left:533.4px;top:320.5px;color:#000;transform-origin:0 50%;transform:scaleX(0.890);">4</div>
<div class="t" style="left:56.6px;top:205.9px;color:#000;transform-origin:0 50%;transform:scaleX(0.820);">0.0</div>
<div class="t" style="left:56.6px;top:355.6px;color:#000;transform-origin:0 50%;transform:scaleX(0.820);">0.0</div>
<div class="t" style="left:108.5px;top:205.9px;color:#000;transform-origin:0 50%;transform:scaleX(0.820);">0.5</div>
<div class="t" style="left:108.5px;top:355.6px;color:#000;transform-origin:0 50%;transform:scaleX(0.820);">0.5</div>
<div class="t" style="left:160.0px;top:205.9px;color:#000;transform-origin:0 50%;transform:scaleX(0.820);">1.0</div>
<div class="t" style="left:160.0px;top:355.6px;color:#000;transform-origin:0 50%;transform:scaleX(0.820);">1.0</div>
<div class="t" style="left:211.9px;top:205.9px;color:#000;transform-origin:0 50%;transform:scaleX(0.820);">1.5</div>
<div class="t" style="left:211.9px;top:355.6px;color:#000;transform-origin:0 50%;transform:scaleX(0.820);">1.5</div>
<div class="t" style="left:264.2px;top:205.9px;color:#000;transform-origin:0 50%;transform:scaleX(0.820);">2.0</div>
<div class="t" style="left:264.2px;top:355.6px;color:#000;transform-origin:0 50%;transform:scaleX(0.820);">2.0</div>
<div class="t" style="left:316.1px;top:205.9px;color:#000;transform-origin:0 50%;transform:scaleX(0.820);">2.5</div>
<div class="t" style="left:316.1px;top:355.6px;color:#000;transform-origin:0 50%;transform:scaleX(0.820);">2.5</div>
<div class="t" style="left:367.6px;top:205.9px;color:#000;transform-origin:0 50%;transform:scaleX(0.820);">3.0</div>
<div class="t" style="left:367.6px;top:355.6px;color:#000;transform-origin:0 50%;transform:scaleX(0.820);">3.0</div>
<div class="t" style="left:419.5px;top:205.9px;color:#000;transform-origin:0 50%;transform:scaleX(0.820);">3.5</div>
<div class="t" style="left:419.5px;top:355.6px;color:#000;transform-origin:0 50%;transform:scaleX(0.820);">3.5</div>
<div class="t" style="left:471.8px;top:205.9px;color:#000;transform-origin:0 50%;transform:scaleX(0.820);">4.0</div>
<div class="t" style="left:471.8px;top:355.6px;color:#000;transform-origin:0 50%;transform:scaleX(0.820);">4.0</div>
<div class="t" style="left:523.7px;top:205.9px;color:#000;transform-origin:0 50%;transform:scaleX(0.820);">4.5</div>
<div class="t" style="left:523.7px;top:355.6px;color:#000;transform-origin:0 50%;transform:scaleX(0.820);">4.5</div>
<div class="t" style="left:582.8px;top:60.5px;color:#000;transform-origin:0 50%;transform:scaleX(1.013);">開始</div>
<div class="t" style="left:666.3px;top:60.5px;color:#000;transform-origin:0 50%;transform:scaleX(1.034);">終了(<u>X</u>)</div>
<div class="t" style="left:569.1px;top:80.7px;color:#0000ff;transform-origin:0 50%;transform:scaleX(0.926);">ディスク情報</div>
<div class="t" style="left:568.1px;top:93.7px;color:#000;transform-origin:0 50%;transform:scaleX(0.850);">タイプ:</div>
<div class="t" style="left:617.0px;top:93.7px;color:#000080;transform-origin:0 50%;transform:scaleX(1.017);">DVD-R</div>
<div class="t" style="left:568.1px;top:108.3px;color:#000;transform-origin:0 50%;transform:scaleX(0.864);">ID:</div>
<div class="t" style="left:617.1px;top:108.3px;color:#000080;transform-origin:0 50%;transform:scaleX(0.869);">LGE08</div>
<div class="t" style="left:566.9px;top:123.4px;color:#000;transform-origin:0 50%;transform:scaleX(1.028);">日付:</div>
<div class="t" style="left:618.0px;top:123.4px;color:#000080;transform-origin:0 50%;transform:scaleX(0.940);">28 June 2005</div>
<div class="t" style="left:568.1px;top:138.5px;color:#000;transform-origin:0 50%;transform:scaleX(0.948);">Label:</div>
<div class="t" style="left:618.0px;top:138.5px;color:#000080;transform-origin:0 50%;transform:scaleX(0.832);">CDS_TEST_B2</div>
<div class="t" style="left:568.7px;top:153.7px;color:#0000ff;transform-origin:0 50%;transform:scaleX(1.000);">Settings</div>
<div class="t" style="left:569.0px;top:172.6px;color:#000;transform-origin:0 50%;transform:scaleX(1.000);">転送速度</div>
<div class="t" style="left:634.4px;top:173.0px;color:#000;transform-origin:0 50%;transform:scaleX(1.011);">6 X</div>
<div class="t" style="left:568.0px;top:197.8px;color:#000;transform-origin:0 50%;transform:scaleX(1.000);">開始</div>
<div class="t" style="left:633.3px;top:196.2px;color:#000;transform-origin:0 50%;transform:scaleX(0.931);">0000 MB</div>
<div class="t" style="left:568.0px;top:220.5px;color:#000;transform-origin:0 50%;transform:scaleX(1.022);">終了位置</div>
<div class="t" style="left:633.3px;top:219.0px;color:#000;transform-origin:0 50%;transform:scaleX(0.931);">4489 MB</div>
<div class="t" style="left:584.8px;top:241.8px;color:#000;transform-origin:0 50%;transform:scaleX(0.944);">Quick Scan</div>
<div class="t" style="left:583.8px;top:260.8px;color:#000;transform-origin:0 50%;transform:scaleX(0.960);">Show C1/PIE</div>
<div class="t" style="left:583.8px;top:275.8px;color:#000;transform-origin:0 50%;transform:scaleX(0.974);">Show C2/PIF</div>
<div class="t" style="left:583.8px;top:290.8px;color:#000;transform-origin:0 50%;transform:scaleX(0.993);">Show Jitter</div>
<div class="t" style="left:583.9px;top:305.8px;color:#000;transform-origin:0 50%;transform:scaleX(0.921);">Show Read Speed</div>
<div class="t" style="left:583.9px;top:320.8px;color:#000;transform-origin:0 50%;transform:scaleX(0.931);">Show Write Speed</div>
<div class="t" style="left:568.1px;top:348.7px;color:#000;transform-origin:0 50%;transform:scaleX(0.895);">品質スコア:</div>
<div class="t" style="left:694.7px;top:348.7px;color:#000080;transform-origin:0 50%;transform:scaleX(0.946);">97</div>
<div class="t" style="left:568.0px;top:380.3px;color:#000;transform-origin:0 50%;transform:scaleX(1.000);">進行状況:</div>
<div class="t" style="left:677.7px;top:380.3px;color:#000080;transform-origin:0 50%;transform:scaleX(0.882);">100 %</div>
<div class="t" style="left:568.1px;top:399.8px;color:#000;transform-origin:0 50%;transform:scaleX(0.887);">ポジション:</div>
<div class="t" style="left:662.1px;top:399.8px;color:#000080;transform-origin:0 50%;transform:scaleX(0.927);">4488 MB</div>
<div class="t" style="left:568.0px;top:417.8px;color:#000;transform-origin:0 50%;transform:scaleX(0.973);">速度:</div>
<div class="t" style="left:676.4px;top:417.8px;color:#000080;transform-origin:0 50%;transform:scaleX(0.909);">6.25 X</div>
<div class="t" style="left:40.0px;top:367.6px;color:#000;transform-origin:0 50%;transform:scaleX(0.941);">PI Errors</div>
<div class="t" style="left:219.9px;top:367.6px;color:#000;transform-origin:0 50%;transform:scaleX(0.979);">PI Failures</div>
<div class="t" style="left:402.6px;top:367.6px;color:#000;transform-origin:0 50%;transform:scaleX(0.977);">Jitter</div>
<div class="t" style="left:27.0px;top:381.5px;color:#000;transform-origin:0 50%;transform:scaleX(0.948);">平均:</div>
<div class="t" style="left:148.7px;top:381.5px;color:#000080;transform-origin:0 50%;transform:scaleX(0.876);">17.46</div>
<div class="t" style="left:26.0px;top:399.5px;color:#000;transform-origin:0 50%;transform:scaleX(0.985);">最大:</div>
<div class="t" style="left:163.2px;top:399.5px;color:#000080;transform-origin:0 50%;transform:scaleX(0.908);">93</div>
<div class="t" style="left:26.0px;top:417.5px;color:#000;transform-origin:0 50%;transform:scaleX(1.000);">合計 :</div>
<div class="t" style="left:140.4px;top:417.5px;color:#000080;transform-origin:0 50%;transform:scaleX(0.865);">218431</div>
<div class="t" style="left:209.0px;top:381.5px;color:#000;transform-origin:0 50%;transform:scaleX(0.948);">平均:</div>
<div class="t" style="left:338.5px;top:381.5px;color:#000080;transform-origin:0 50%;transform:scaleX(0.841);">0.11</div>
<div class="t" style="left:208.0px;top:399.5px;color:#000;transform-origin:0 50%;transform:scaleX(0.985);">最大:</div>
<div class="t" style="left:351.7px;top:399.5px;color:#000080;transform-origin:0 50%;transform:scaleX(0.883);">6</div>
<div class="t" style="left:208.0px;top:417.5px;color:#000;transform-origin:0 50%;transform:scaleX(1.000);">合計 :</div>
<div class="t" style="left:332.7px;top:417.5px;color:#000080;transform-origin:0 50%;transform:scaleX(0.936);">1085</div>
<div class="t" style="left:389.2px;top:381.5px;color:#000;transform-origin:0 50%;transform:scaleX(0.948);">平均:</div>
<div class="t" style="left:507.6px;top:381.5px;color:#000080;transform-origin:0 50%;transform:scaleX(0.835);">9.79 %</div>
<div class="t" style="left:388.2px;top:399.5px;color:#000;transform-origin:0 50%;transform:scaleX(0.985);">最大:</div>
<div class="t" style="left:507.1px;top:399.5px;color:#000080;transform-origin:0 50%;transform:scaleX(0.871);">11.4 %</div>
<div class="t" style="left:388.3px;top:422.8px;color:#000;transform-origin:0 50%;transform:scaleX(0.935);">PO Failures:</div>
<div class="t" style="left:531.8px;top:422.8px;color:#000080;transform-origin:0 50%;transform:scaleX(0.967);">0</div>
</body></html>
